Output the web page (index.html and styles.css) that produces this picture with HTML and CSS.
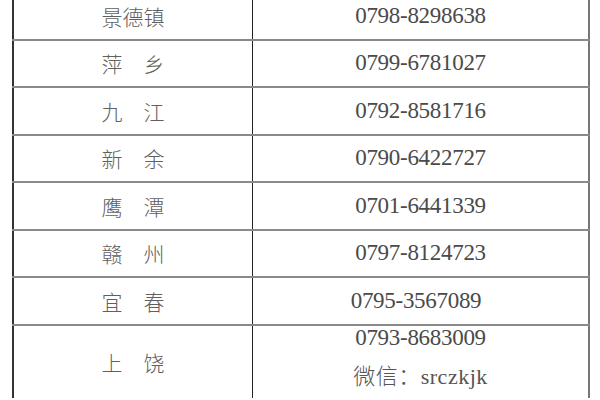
FILE: index.html
```html
<!DOCTYPE html>
<html lang="zh">
<head>
<meta charset="utf-8">
<link rel="stylesheet" href="styles.css">
</head>
<body>
<div class="wrap">
<table class="contacts">
  <tr><td class="city">景德镇</td><td class="tel">0798-8298638</td></tr>
  <tr><td class="city">萍　乡</td><td class="tel">0799-6781027</td></tr>
  <tr><td class="city">九　江</td><td class="tel">0792-8581716</td></tr>
  <tr><td class="city">新　余</td><td class="tel">0790-6422727</td></tr>
  <tr><td class="city">鹰　潭</td><td class="tel">0701-6441339</td></tr>
  <tr><td class="city">赣　州</td><td class="tel">0797-8124723</td></tr>
  <tr><td class="city">宜　春</td><td class="tel tel-left">0795-3567089</td></tr>
  <tr class="last"><td class="city">上　饶</td><td class="tel multi"><div class="line">0793-8683009</div><div class="line wx">微信：srczkjk</div></td></tr>
</table>
</div>
</body>
</html>
```

FILE: styles.css
```css
html, body {
  margin: 0;
  padding: 0;
  background: #fff;
}
.wrap {
  margin-top: -9px;
  padding-left: 12px;
}
.contacts {
  border-collapse: collapse;
  width: 578px;
  table-layout: fixed;
}
.contacts td {
  height: 45.5px;
  padding: 0;
  text-align: center;
  vertical-align: middle;
  border-top: 2px solid #8a8a8a;
  border-bottom: 2px solid #8a8a8a;
}
.city {
  width: 238px;
  border-left: 2px solid #333;
  border-right: 1px solid #222;
  font-family: "Noto Sans CJK SC", sans-serif;
  font-weight: 300;
  font-size: 21px;
  color: #606060;
}
.tel {
  border-right: 2px solid #777;
  font-family: "Liberation Serif", "Noto Sans CJK SC", serif;
  font-size: 23px;
  letter-spacing: -0.3px;
  color: #4a4a4a;
}
.tel-left {
  padding-right: 9px !important;
}
.last td {
  height: 72px;
  border-bottom: none;
}
.contacts .multi {
  vertical-align: top;
}
.multi .line {
  line-height: 24px;
}
.multi .wx {
  margin-top: 15px;
  font-weight: 300;
  font-size: 22px;
  letter-spacing: 0.5px;
  color: #555;
}
```
